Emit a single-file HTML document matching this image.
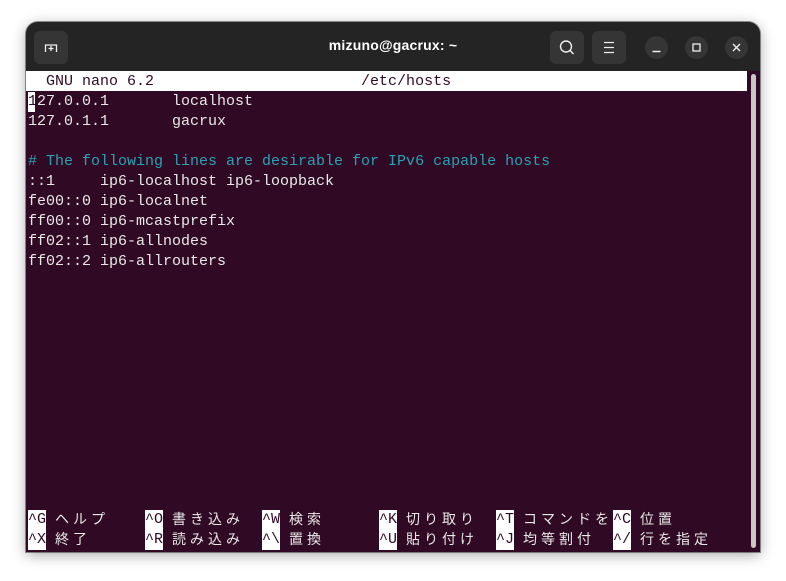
<!DOCTYPE html>
<html><head><meta charset="utf-8"><style>
*{margin:0;padding:0;box-sizing:border-box}
body{width:786px;height:581px;background:#fff;position:relative;overflow:hidden;font-family:"Liberation Mono","Noto Sans CJK JP",monospace}
.win{position:absolute;left:26px;top:22px;width:734px;height:530px;border-radius:12px 12px 0 0;background:#300a24;overflow:hidden;box-shadow:0 3px 14px rgba(0,0,0,.35),0 0 0 1px rgba(0,0,0,.4)}
.tb{position:absolute;left:0;top:0;width:734px;height:49px;background:#242424}
.title{position:absolute;left:0;right:0;top:15px;text-align:center;color:#fff;font:bold 14px "Liberation Sans",sans-serif;letter-spacing:.2px}
.btn{position:absolute;top:9px;width:34px;height:33px;background:#353535;border-radius:6px}
.cb{position:absolute;top:14px;width:23px;height:23px;border-radius:50%;background:#353535}
.t{position:absolute;left:2px;font-size:15px;line-height:20px;color:#e8e8e8;white-space:pre}
.hdr{position:absolute;left:0;top:49px;width:721px;height:20px;background:#fff}
.sb{position:absolute;left:725px;top:52px;width:5px;height:474px;background:#c8c8c8;border-radius:3px}
.k{position:absolute;background:#fff;color:#300a24;font-size:15px;line-height:20px;height:20px;width:18px;text-align:left;white-space:pre}
.j{position:absolute;font-size:14px;line-height:20px;color:#e8e8e8}
.j span{display:inline-block;width:18px;text-align:center}
.tx{position:absolute;top:1px;left:0}
</style></head><body>
<div class="win">
 <div class="tb">
  <div class="btn" style="left:8px"><svg width="34" height="33"><path d="M11.5 21 v-7 h11 v7 M17 15 v5 M14.5 17.5 h5" stroke="#eee" stroke-width="1.3" fill="none"/></svg></div>
  <div class="title">mizuno@gacrux: ~</div>
  <div class="btn" style="left:524px"><svg width="34" height="33"><circle cx="16" cy="15.5" r="5.5" stroke="#eee" stroke-width="1.4" fill="none"/><path d="M20 19.5 l3.5 3.5" stroke="#eee" stroke-width="1.5"/></svg></div>
  <div class="btn" style="left:566px"><svg width="34" height="33"><path d="M12 11.5h10M12 16.5h10M12 21.5h10" stroke="#eee" stroke-width="1.3"/></svg></div>
  <div class="cb" style="left:619px"><svg width="23" height="23"><path d="M7.5 15.5h8" stroke="#eee" stroke-width="1.4"/></svg></div>
  <div class="cb" style="left:659px"><svg width="23" height="23"><rect x="8" y="8" width="7" height="7" stroke="#eee" stroke-width="1.3" fill="none"/></svg></div>
  <div class="cb" style="left:699px"><svg width="23" height="23"><path d="M8 8l7 7M15 8l-7 7" stroke="#eee" stroke-width="1.4"/></svg></div>
 </div>
 <div class="hdr"></div>
 <div class="tx">
 <div class="t" style="top:49px;color:#300a24">  GNU nano 6.2                       /etc/hosts</div>
 <div style="position:absolute;left:2px;top:69px;width:7px;height:20px;background:#fff"></div>
 <div class="t" style="top:69px"><span style="color:#300a24">1</span>27.0.0.1       localhost
127.0.1.1       gacrux

<span style="color:#2aa1b3"># The following lines are desirable for IPv6 capable hosts</span>
::1     ip6-localhost ip6-loopback
fe00::0 ip6-localnet
ff00::0 ip6-mcastprefix
ff02::1 ip6-allnodes
ff02::2 ip6-allrouters</div>
 </div>
 <div class="sb"></div>

 <div class="k" style="left:2px;top:488px">^G</div><div class="j" style="left:27px;top:489px"><span>ヘ</span><span>ル</span><span>プ</span></div>
 <div class="k" style="left:119px;top:488px">^O</div><div class="j" style="left:144px;top:489px"><span>書</span><span>き</span><span>込</span><span>み</span></div>
 <div class="k" style="left:236px;top:488px">^W</div><div class="j" style="left:261px;top:489px"><span>検</span><span>索</span></div>
 <div class="k" style="left:353px;top:488px">^K</div><div class="j" style="left:378px;top:489px"><span>切</span><span>り</span><span>取</span><span>り</span></div>
 <div class="k" style="left:470px;top:488px">^T</div><div class="j" style="left:495px;top:489px"><span>コ</span><span>マ</span><span>ン</span><span>ド</span><span>を</span></div>
 <div class="k" style="left:587px;top:488px">^C</div><div class="j" style="left:612px;top:489px"><span>位</span><span>置</span></div>

 <div class="k" style="left:2px;top:508px">^X</div><div class="j" style="left:27px;top:509px"><span>終</span><span>了</span></div>
 <div class="k" style="left:119px;top:508px">^R</div><div class="j" style="left:144px;top:509px"><span>読</span><span>み</span><span>込</span><span>み</span></div>
 <div class="k" style="left:236px;top:508px">^\</div><div class="j" style="left:261px;top:509px"><span>置</span><span>換</span></div>
 <div class="k" style="left:353px;top:508px">^U</div><div class="j" style="left:378px;top:509px"><span>貼</span><span>り</span><span>付</span><span>け</span></div>
 <div class="k" style="left:470px;top:508px">^J</div><div class="j" style="left:495px;top:509px"><span>均</span><span>等</span><span>割</span><span>付</span></div>
 <div class="k" style="left:587px;top:508px">^/</div><div class="j" style="left:612px;top:509px"><span>行</span><span>を</span><span>指</span><span>定</span></div>
</div>
</body></html>
